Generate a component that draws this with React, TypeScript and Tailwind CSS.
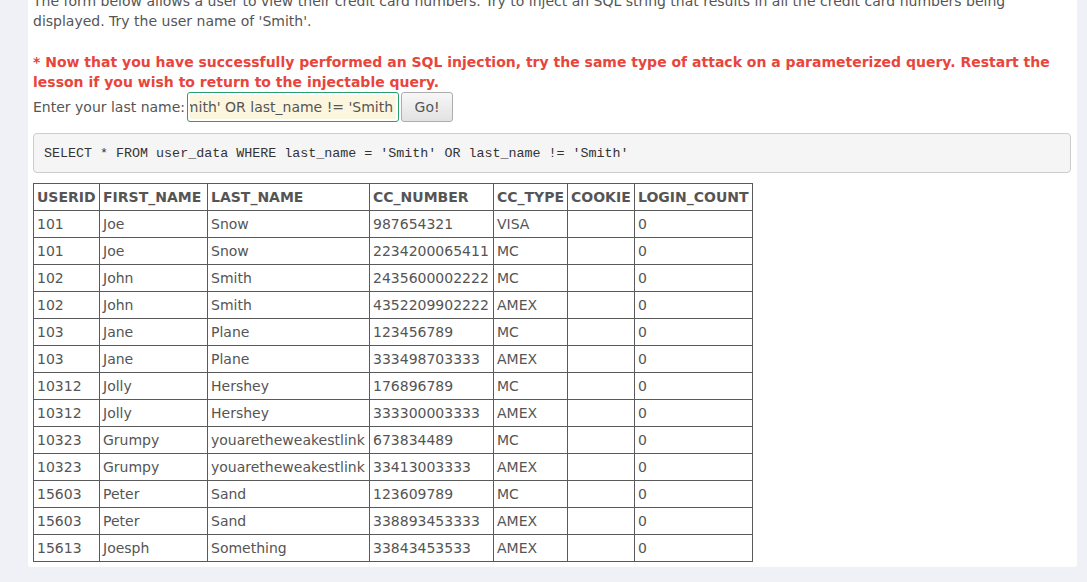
import React from "react";

type Row = {
  userid: string;
  first: string;
  last: string;
  cc: string;
  type: string;
  cookie: string;
  logins: string;
};

const ROWS: Row[] = [
  { userid: "101", first: "Joe", last: "Snow", cc: "987654321", type: "VISA", cookie: "", logins: "0" },
  { userid: "101", first: "Joe", last: "Snow", cc: "2234200065411", type: "MC", cookie: "", logins: "0" },
  { userid: "102", first: "John", last: "Smith", cc: "2435600002222", type: "MC", cookie: "", logins: "0" },
  { userid: "102", first: "John", last: "Smith", cc: "4352209902222", type: "AMEX", cookie: "", logins: "0" },
  { userid: "103", first: "Jane", last: "Plane", cc: "123456789", type: "MC", cookie: "", logins: "0" },
  { userid: "103", first: "Jane", last: "Plane", cc: "333498703333", type: "AMEX", cookie: "", logins: "0" },
  { userid: "10312", first: "Jolly", last: "Hershey", cc: "176896789", type: "MC", cookie: "", logins: "0" },
  { userid: "10312", first: "Jolly", last: "Hershey", cc: "333300003333", type: "AMEX", cookie: "", logins: "0" },
  { userid: "10323", first: "Grumpy", last: "youaretheweakestlink", cc: "673834489", type: "MC", cookie: "", logins: "0" },
  { userid: "10323", first: "Grumpy", last: "youaretheweakestlink", cc: "33413003333", type: "AMEX", cookie: "", logins: "0" },
  { userid: "15603", first: "Peter", last: "Sand", cc: "123609789", type: "MC", cookie: "", logins: "0" },
  { userid: "15603", first: "Peter", last: "Sand", cc: "338893453333", type: "AMEX", cookie: "", logins: "0" },
  { userid: "15613", first: "Joesph", last: "Something", cc: "33843453533", type: "AMEX", cookie: "", logins: "0" },
];

const QUERY = "SELECT * FROM user_data WHERE last_name = 'Smith' OR last_name != 'Smith'";

const th = "border border-[#5a5a5a] px-[3px] h-[27px] text-left font-bold align-middle";
const td = "border border-[#5a5a5a] px-[3px] h-[27px] text-left font-normal align-middle whitespace-nowrap";

export default function App() {
  return (
    <div className="h-[582px] overflow-hidden bg-[#f0f1f7] pl-[28px] pr-[10px] font-['DejaVu_Sans',sans-serif] text-[14px] leading-[20px] text-[#555]">
      <div className="bg-white rounded-b-[3px] px-[5px] pb-[5px] pr-[6px]">
        <p className="-mt-[9px] mb-[21px]">
          The form below allows a user to view their credit card numbers. Try to inject an SQL string that results in
          all the credit card numbers being displayed. Try the user name of 'Smith'.
        </p>
        <p className="font-bold text-[#e8453c]">
          * Now that you have successfully performed an SQL injection, try the same type of attack on a parameterized
          query. Restart the lesson if you wish to return to the injectable query.
        </p>

        <div className="flex items-center gap-[2px]">
          <span>Enter your last name:</span>
          <div className="flex h-[30px] w-[212px] items-center rounded-[3px] border border-[#27a06a] bg-white p-[2px]">
            <div className="flex h-full w-full items-center justify-end overflow-hidden whitespace-nowrap bg-[#fdf6df] pr-[3px]">
              Smith' OR last_name != 'Smith
            </div>
          </div>
          <button className="h-[30px] w-[52px] rounded-[3px] border border-[#adadad] bg-gradient-to-b from-[#f7f7f7] to-[#e2e2e2] text-[#555]">
            Go!
          </button>
        </div>

        <pre className="mt-[11px] mb-[10px] rounded-[4px] border border-[#cccccc] bg-[#f5f5f5] px-[10px] py-[9.5px] font-['Liberation_Mono',monospace] text-[13.35px] leading-[19px] text-[#333]">
          {QUERY}
        </pre>

        <table className="w-[719px] table-fixed border-collapse">
          <thead>
            <tr>
              <th className={`${th} w-[66px]`}>USERID</th>
              <th className={`${th} w-[108px]`}>FIRST_NAME</th>
              <th className={`${th} w-[162px]`}>LAST_NAME</th>
              <th className={`${th} w-[124px]`}>CC_NUMBER</th>
              <th className={`${th} w-[74px]`}>CC_TYPE</th>
              <th className={`${th} w-[67px]`}>COOKIE</th>
              <th className={`${th} w-[118px]`}>LOGIN_COUNT</th>
            </tr>
          </thead>
          <tbody>
            {ROWS.map((r, i) => (
              <tr key={i}>
                <td className={td}>{r.userid}</td>
                <td className={td}>{r.first}</td>
                <td className={td}>{r.last}</td>
                <td className={td}>{r.cc}</td>
                <td className={td}>{r.type}</td>
                <td className={td}>{r.cookie}</td>
                <td className={td}>{r.logins}</td>
              </tr>
            ))}
          </tbody>
        </table>
      </div>
    </div>
  );
}
